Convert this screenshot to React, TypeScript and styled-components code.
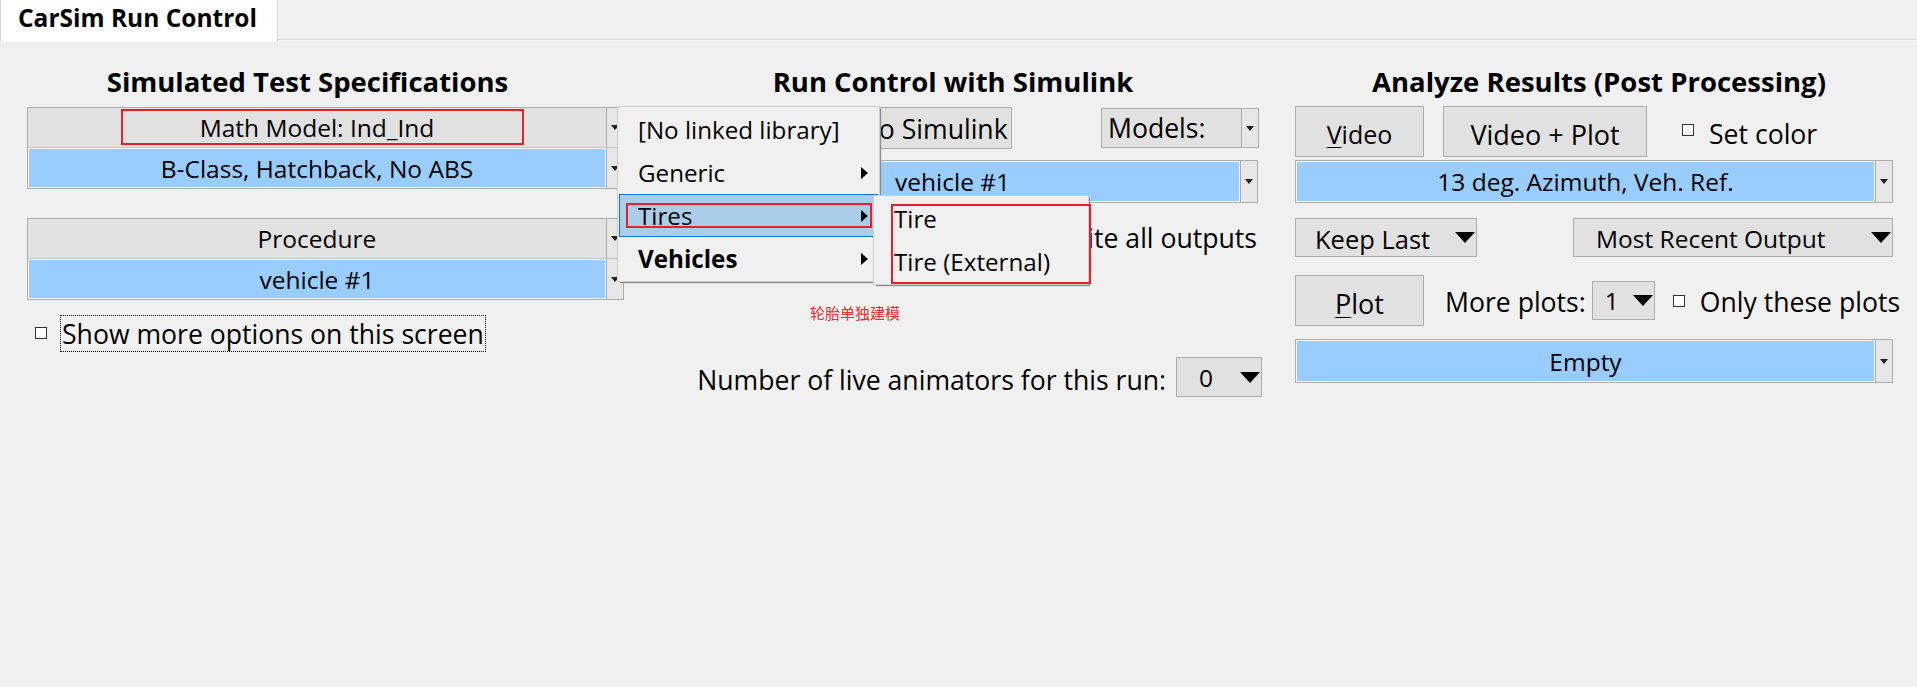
import React from "react";
import styled, { createGlobalStyle } from "styled-components";

const GlobalStyle = createGlobalStyle`
  html, body { margin: 0; padding: 0; background: #f0f0f0; }
  body { font-family: "Open Sans", "Noto Sans", sans-serif; color: #000; overflow: hidden; }
  * { box-sizing: border-box; }
`;

const FIELD = 24.5;
const LABEL = 26.6;

const Page = styled.div`
  position: relative;
  width: 1917px;
  height: 687px;
  background: #f0f0f0;
  overflow: hidden;
  font-size: ${FIELD}px;
`;

const TabBar = styled.div`
  display: flex;
  height: 40px;
  border-bottom: 1px solid #d9d9d9;
  box-shadow: 0 1px 0 #fafafa;
`;

const Tab = styled.div`
  width: 278px;
  height: 42px;
  background: #fff;
  border-left: 1px solid #dadada;
  border-right: 1px solid #dadada;
  padding-left: 17px;
  font-weight: 700;
  font-size: 24.5px;
  line-height: 36px;
  position: relative;
  z-index: 1;
  white-space: nowrap;
`;

const Columns = styled.div`
  display: grid;
  grid-template-columns: 597px 671px 598px;
  padding-left: 27px;
`;

const Column = styled.div<{ $pl?: number; $pr?: number }>`
  display: flex;
  flex-direction: column;
  padding-left: ${(p) => p.$pl ?? 0}px;
  padding-right: ${(p) => p.$pr ?? 0}px;
`;

const Title = styled.div<{ $shift: number }>`
  margin-top: 20px;
  height: 44px;
  line-height: 44px;
  font-size: 27.5px;
  font-weight: 700;
  text-align: center;
  white-space: nowrap;
  transform: translateX(${(p) => p.$shift}px);
`;

/* ---------- combo box (list-style dropdown rows) ---------- */
const Combo = styled.div<{ $mt: number; $ml?: number; $w?: number }>`
  margin-top: ${(p) => p.$mt}px;
  margin-left: ${(p) => p.$ml ?? 0}px;
  width: ${(p) => (p.$w ? `${p.$w}px` : "auto")};
  border: 1px solid #adadad;
  display: flex;
  flex-direction: column;
  background: #e6e6e6;
  flex-shrink: 0;
`;

const ComboRow = styled.div<{ $h: number }>`
  display: flex;
  height: ${(p) => p.$h}px;
  & + & {
    border-top: 1px solid #c4c4c4;
  }
`;

const ComboField = styled.div<{ $blue?: boolean; $left?: number; $fs?: number }>`
  position: relative;
  flex: 1;
  display: flex;
  align-items: center;
  justify-content: ${(p) => (p.$left !== undefined ? "flex-start" : "center")};
  padding-left: ${(p) => p.$left ?? 0}px;
  font-size: ${(p) => p.$fs ?? FIELD}px;
  background: ${(p) => (p.$blue ? "#99ccff" : "#e1e1e1")};
  box-shadow: ${(p) => (p.$blue ? "inset 0 0 0 1px #f4f8fc" : "none")};
  border-right: 1px solid #a9a9a9;
  white-space: nowrap;
`;

const ComboArrow = styled.div`
  width: 16px;
  display: flex;
  align-items: center;
  justify-content: center;
  background: #e6e6e6;
  &::after {
    content: "";
    border-left: 4px solid transparent;
    border-right: 4px solid transparent;
    border-top: 5px solid #222;
  }
`;

/* ---------- buttons & dropdowns ---------- */
const Button = styled.div<{ $w: number; $h: number; $ml?: number; $fs?: number; $pt?: number }>`
  width: ${(p) => p.$w}px;
  height: ${(p) => p.$h}px;
  margin-left: ${(p) => p.$ml ?? 0}px;
  padding-top: ${(p) => p.$pt ?? 0}px;
  font-size: ${(p) => p.$fs ?? FIELD}px;
  background: #e1e1e1;
  border: 1px solid #adadad;
  display: flex;
  align-items: center;
  justify-content: center;
  white-space: nowrap;
  flex-shrink: 0;
  u {
    text-decoration-thickness: 1px;
    text-underline-offset: 3px;
  }
`;

const Drop = styled.div<{ $w: number; $h: number; $pl: number; $ml?: number }>`
  width: ${(p) => p.$w}px;
  height: ${(p) => p.$h}px;
  margin-left: ${(p) => p.$ml ?? 0}px;
  background: #e1e1e1;
  border: 1px solid #adadad;
  display: flex;
  align-items: center;
  justify-content: space-between;
  padding-left: ${(p) => p.$pl}px;
  padding-right: 1px;
  white-space: nowrap;
  flex-shrink: 0;
`;

const BigArrow = styled.span`
  width: 0;
  height: 0;
  border-left: 10px solid transparent;
  border-right: 10px solid transparent;
  border-top: 11px solid #000;
`;

/* ---------- rows ---------- */
const Row = styled.div<{ $mt: number; $h: number; $justify?: string; $gap?: number; $pr?: number }>`
  margin-top: ${(p) => p.$mt}px;
  height: ${(p) => p.$h}px;
  display: flex;
  align-items: center;
  justify-content: ${(p) => p.$justify ?? "flex-start"};
  gap: ${(p) => p.$gap ?? 0}px;
  padding-right: ${(p) => p.$pr ?? 0}px;
  white-space: nowrap;
`;

const Check = styled.span<{ $mr: number; $ml?: number; $dy?: number }>`
  width: 12px;
  height: 12px;
  border: 1px solid #333;
  background: #fff;
  margin-left: ${(p) => p.$ml ?? 0}px;
  margin-right: ${(p) => p.$mr}px;
  transform: translateY(${(p) => p.$dy ?? 0}px);
  flex-shrink: 0;
`;

const Label = styled.span<{ $ml?: number; $fs?: number; $dy?: number }>`
  margin-left: ${(p) => p.$ml ?? 0}px;
  font-size: ${(p) => p.$fs ?? LABEL}px;
  transform: translateY(${(p) => p.$dy ?? 0}px);
`;

const Focus = styled.span`
  border: 1px dotted #000;
  height: 37px;
  display: flex;
  align-items: center;
  padding: 0 1px;
  font-size: ${LABEL}px;
`;

const Note = styled.div`
  margin-top: 49px;
  margin-left: 152px;
  height: 16px;
  line-height: 16px;
  font-family: "Noto Sans CJK SC", sans-serif;
  font-size: 15px;
  color: #f0282d;
`;

/* ---------- annotation marks ---------- */
const RedMark = styled.span<{ $l: number; $t: number; $w: number; $h: number }>`
  position: absolute;
  left: ${(p) => p.$l}px;
  top: ${(p) => p.$t}px;
  width: ${(p) => p.$w}px;
  height: ${(p) => p.$h}px;
  border: 2px solid #e8202a;
  pointer-events: none;
`;

/* ---------- context menus ---------- */
const Menu = styled.div<{ $l: number; $t: number; $w: number }>`
  position: absolute;
  left: ${(p) => p.$l}px;
  top: ${(p) => p.$t}px;
  width: ${(p) => p.$w}px;
  background: #f0f0f0;
  border: 1px solid #cfcfcf;
  box-shadow: 2px 2px 1px -1px #8d8d8d;
  padding: 1px 1px;
  display: flex;
  flex-direction: column;
  z-index: 5;
  font-size: 24.2px;
`;

const MenuItem = styled.div<{ $hot?: boolean; $bold?: boolean; $sub?: boolean }>`
  position: relative;
  height: 43px;
  display: flex;
  align-items: center;
  justify-content: space-between;
  padding-left: 18px;
  padding-right: 9px;
  font-weight: ${(p) => (p.$bold ? 700 : 400)};
  background: ${(p) => (p.$hot ? "#aacde9" : "transparent")};
  border: 1px solid ${(p) => (p.$hot ? "#0078d7" : "transparent")};
  white-space: nowrap;
  &::after {
    content: "";
    display: ${(p) => (p.$sub ? "block" : "none")};
    border-top: 6px solid transparent;
    border-bottom: 6px solid transparent;
    border-left: 7px solid #000;
  }
`;

export default function App() {
  return (
    <>
      <GlobalStyle />
      <Page>
        <TabBar>
          <Tab>CarSim Run Control</Tab>
        </TabBar>

        <Columns>
          {/* Left: Simulated Test Specifications */}
          <Column>
            <Title $shift={-18}>Simulated Test Specifications</Title>
            <Combo $mt={3}>
              <ComboRow $h={39}>
                <ComboField>
                  Math Model: Ind_Ind
                  <RedMark $l={93} $t={1} $w={403} $h={36} />
                </ComboField>
                <ComboArrow />
              </ComboRow>
              <ComboRow $h={41}>
                <ComboField $blue>B-Class, Hatchback, No ABS</ComboField>
                <ComboArrow />
              </ComboRow>
            </Combo>
            <Combo $mt={29}>
              <ComboRow $h={39}>
                <ComboField>Procedure</ComboField>
                <ComboArrow />
              </ComboRow>
              <ComboRow $h={41}>
                <ComboField $blue>vehicle #1</ComboField>
                <ComboArrow />
              </ComboRow>
            </Combo>
            <Row $mt={15} $h={37}>
              <Check $ml={8} $mr={13} $dy={-1} />
              <Focus>Show more options on this screen</Focus>
            </Row>
          </Column>

          {/* Middle: Run Control with Simulink */}
          <Column $pl={34} $pr={33}>
            <Title $shift={-7}>Run Control with Simulink</Title>
            <Row $mt={3} $h={42}>
              <Button $w={216} $h={42} $ml={138} $fs={26.6} $pt={2}>
                Send to Simulink
              </Button>
              <Combo $ml={89} $mt={0} $w={158}>
                <ComboRow $h={38}>
                  <ComboField $left={6} $fs={26.6}>
                    Models:
                  </ComboField>
                  <ComboArrow />
                </ComboRow>
              </Combo>
            </Row>
            <Combo $mt={11} $ml={150} $w={450}>
              <ComboRow $h={41}>
                <ComboField $blue $left={86}>
                  vehicle #1
                </ComboField>
                <ComboArrow />
              </ComboRow>
            </Combo>
            <Row $mt={17} $h={36} $justify="flex-end" $pr={5}>
              <Check $mr={12} />
              <Label>Overwrite all outputs</Label>
            </Row>
            <Note>轮胎单独建模</Note>
            <Row $mt={36} $h={40} $justify="flex-end" $gap={10}>
              <Label $dy={3}>Number of live animators for this run:</Label>
              <Drop $w={86} $h={40} $pl={22}>
                0
                <BigArrow />
              </Drop>
            </Row>
          </Column>

          {/* Right: Analyze Results */}
          <Column>
            <Title $shift={5}>Analyze Results (Post Processing)</Title>
            <Row $mt={2} $h={51}>
              <Button $w={129} $h={51} $fs={25} $pt={5}>
                <span>
                  <u>V</u>ideo
                </span>
              </Button>
              <Button $w={204} $h={51} $ml={19} $fs={27} $pt={5}>
                Video + Plot
              </Button>
              <Check $ml={35} $mr={15} $dy={-2} />
              <Label $dy={2}>Set color</Label>
            </Row>
            <Combo $mt={3}>
              <ComboRow $h={41}>
                <ComboField $blue>13 deg. Azimuth, Veh. Ref.</ComboField>
                <ComboArrow />
              </ComboRow>
            </Combo>
            <Row $mt={15} $h={39} $justify="space-between">
              <Drop $w={182} $h={39} $pl={19}>
                <Label $fs={25.5} $dy={1}>
                  Keep Last
                </Label>
                <BigArrow />
              </Drop>
              <Drop $w={320} $h={39} $pl={22}>
                <Label $fs={FIELD} $dy={1}>
                  Most Recent Output
                </Label>
                <BigArrow />
              </Drop>
            </Row>
            <Row $mt={18} $h={51}>
              <Button $w={129} $h={51} $fs={27} $pt={5}>
                <span>
                  <u>P</u>lot
                </span>
              </Button>
              <Label $ml={21} $dy={1}>
                More plots:
              </Label>
              <Drop $w={63} $h={39} $pl={12} $ml={6}>
                1
                <BigArrow />
              </Drop>
              <Check $ml={18} $mr={15} />
              <Label $dy={1}>Only these plots</Label>
            </Row>
            <Combo $mt={13}>
              <ComboRow $h={42}>
                <ComboField $blue>Empty</ComboField>
                <ComboArrow />
              </ComboRow>
            </Combo>
          </Column>
        </Columns>

        {/* Cascading context menu overlay */}
        <Menu $l={617} $t={106} $w={263}>
          <MenuItem>[No linked library]</MenuItem>
          <MenuItem $sub>Generic</MenuItem>
          <MenuItem $hot $sub>
            Tires
            <RedMark $l={6} $t={8} $w={246} $h={25} />
          </MenuItem>
          <MenuItem $sub $bold>
            Vehicles
          </MenuItem>
        </Menu>
        <Menu $l={873} $t={195} $w={216}>
          <MenuItem>Tire</MenuItem>
          <MenuItem>Tire (External)</MenuItem>
          <RedMark $l={17} $t={8} $w={200} $h={80} />
        </Menu>
      </Page>
    </>
  );
}
